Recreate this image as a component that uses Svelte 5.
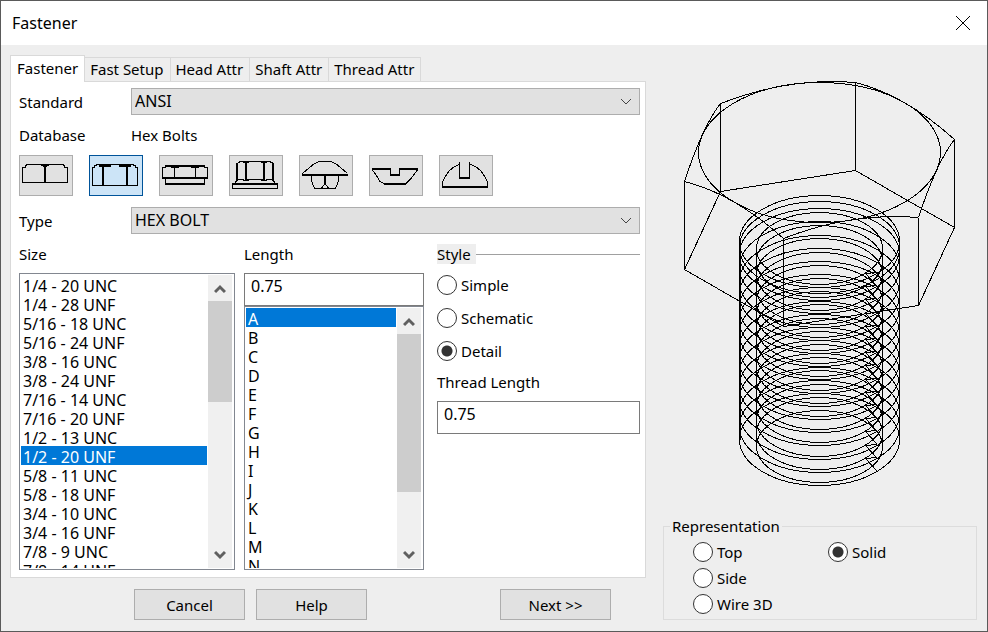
<script>
  // Fastener dialog: database pickers on the left, wireframe preview on the right.

  const tabs = ['Fastener', 'Fast Setup', 'Head Attr', 'Shaft Attr', 'Thread Attr'];

  const sizes = [
    '1/4 - 20 UNC', '1/4 - 28 UNF', '5/16 - 18 UNC', '5/16 - 24 UNF',
    '3/8 - 16 UNC', '3/8 - 24 UNF', '7/16 - 14 UNC', '7/16 - 20 UNF',
    '1/2 - 13 UNC', '1/2 - 20 UNF', '5/8 - 11 UNC', '5/8 - 18 UNF',
    '3/4 - 10 UNC', '3/4 - 16 UNF', '7/8 - 9 UNC', '7/8 - 14 UNF'
  ];
  const lengths = 'ABCDEFGHIJKLMN'.split('');

  // thin strokes are 1px, thick ones 2px
  const heads = [
    {
      name: 'Square Bolts',
      thin: 'M3.5 27.5V12.5H6.5V10.5H7.5V9.5H44.5V10.5H45.5V12.5H48.5V27.5ZM22 10.5H30M24 11.5H28',
      thick: 'M26 11V27'
    },
    {
      name: 'Hex Bolts',
      thin: 'M3.5 30.5V12.5H5.5V10.5H7.5V9.5H44.5V10.5H46.5V12.5H48.5V30.5Z',
      thick: 'M14 11V30M38 11V30M10 11H22M30 11H42'
    },
    {
      name: 'Hex Nuts',
      thin: 'M3.5 22V12.5H6.5V10.5H45.5V12.5H48.5V22M15.5 12V22M36.5 12V22M12 12.5H20M32 12.5H40M6.5 23V29M45.5 23V29',
      thick: 'M7 11H46M3 23H49M6 29H46'
    },
    {
      name: 'Flange Bolts',
      thin: 'M8.5 7.5H10.5V6.5H41.5V7.5H43.5M3.5 29V33.5H48.5V29M9 24.5H15M18 24.5H34M37 24.5H44M14 7.5H20M14 25.5H20M32 7.5H38M32 25.5H38M6.5 28V26.5H8M45.5 28V26.5H44',
      thick: 'M8 8V26M17 7V26M35 7V26M44 8V26M3 29H49'
    },
    {
      name: 'Round Head Bolts',
      thin: 'M3.5 19V18.5L10.5 12.5L15.5 8.5L20.5 6.5H31.5L36.5 8.5L41.5 12.5L48.5 18.5M12.5 21V26L15.5 33.5H36.5L39.5 26V21M26 29L22.5 33M26 29L29.5 33',
      thick: 'M3 20H49M26 21V30'
    },
    {
      name: 'Flat Head Screws',
      thin: 'M3.5 15L7.5 20.5L10.5 26L15.5 29M36.5 29L41.5 24L48.5 15M21.5 14V20M30.5 14V20',
      thick: 'M3 14H22M30 14H49M21 20H31M15 29H37'
    },
    {
      name: 'Slotted Screws',
      thin: 'M3.5 31V27.5L5.5 22.5L10.5 15.5L15.5 11.5L20.5 9.5V8M48.5 31V27.5L46.5 22.5L41.5 15.5L36.5 11.5L31.5 9.5M20.5 7V23M30.5 7V23',
      thick: 'M3 32H49M20 23H31'
    }
  ];

  const styles = ['Simple', 'Schematic', 'Detail'];
  const views = ['Top', 'Side', 'Wire 3D', 'Solid'];

  let standard = $state('ANSI');
  let head = $state('Hex Bolts');
  let type = $state('HEX BOLT');
  let size = $state('1/2 - 20 UNF');
  let lengthRow = $state('A');
  let length = $state('0.75');
  let style = $state('Detail');
  let threadLength = $state('0.75');
  let view = $state('Solid');
  let tab = $state('Fastener');

  // Preview geometry, origin at the centre of the head's top circle.
  const headDepth = 88;
  const hex = [
    [-99.5, -48.5], [35.5, -69.5], [134.5, -12.5],
    [98.5, 65.5], [-36.5, 86.5], [-135.5, 29.5]
  ];
  const edges = hex.map((a, i) => [a, hex[(i + 1) % 6]]);

  const chamfer = edges
    .map(([a, b]) => `M${a}Q${(a[0] + b[0]) / 2} ${(a[1] + b[1]) / 2 - 16} ${b}`)
    .join('');
  const underside = edges
    .map(([a, b]) => `M${a}v${headDepth}L${b[0]} ${b[1] + headDepth}`)
    .join('');

  const pitch = 13.2;
  const turns = Array.from({ length: 16 }, (_, i) => Math.round(i * pitch));
  const profile = turns
    .slice(0, 15)
    .map((y) => `M57.5 ${y + 120.5}l-12 1l12 13`)
    .join('');
</script>

{#snippet scrollbar(thumb, name)}
  <div class="scrollbar">
    <button type="button" class="arrow" aria-label="Scroll {name} up">
      <svg width="12" height="12" viewBox="0 0 12 12"><path d="M1 10l5-5 5 5" /></svg>
    </button>
    <div class="track"><div class="thumb" style:height="{thumb}%"></div></div>
    <button type="button" class="arrow" aria-label="Scroll {name} down">
      <svg width="12" height="12" viewBox="0 0 12 12"><path d="M1 3l5 5 5-5" /></svg>
    </button>
  </div>
{/snippet}

{#snippet chevron()}
  <svg class="chevron" width="12" height="8" viewBox="0 0 12 8"><path d="M1 1l5 5 5-5" /></svg>
{/snippet}

<div class="window">
  <header class="titlebar">
    <h1>Fastener</h1>
    <button type="button" class="close" aria-label="Close">
      <svg width="16" height="16" viewBox="0 0 16 16"><path d="M1 1l14 14M15 1L1 15" /></svg>
    </button>
  </header>

  <main>
    <div class="left">
      <div class="tabs" role="tablist">
        {#each tabs as t}
          <button type="button" role="tab" class="tab" class:active={tab === t} aria-selected={tab === t} onclick={() => (tab = t)}>{t}</button>
        {/each}
      </div>

      <section class="panel">
        <div class="row">
          <label for="standard">Standard</label>
          <div class="combo">
            <select id="standard" bind:value={standard}>
              <option>ANSI</option>
            </select>
            {@render chevron()}
          </div>
        </div>

        <div class="row database">
          <span>Database</span>
          <span>{head}</span>
        </div>

        <div class="heads">
          {#each heads as h}
            <button type="button" class="head" class:active={head === h.name} aria-label={h.name} onclick={() => (head = h.name)}>
              <svg width="52" height="39" viewBox="1 1 52 39">
                <path d={h.thin} />
                <path d={h.thick} stroke-width="2" />
              </svg>
            </button>
          {/each}
        </div>

        <div class="row">
          <label for="type">Type</label>
          <div class="combo">
            <select id="type" bind:value={type}>
              <option>HEX BOLT</option>
            </select>
            {@render chevron()}
          </div>
        </div>

        <div class="columns">
          <div class="column">
            <label for="size">Size</label>
            <div class="list">
              <select id="size" size="15" bind:value={size}>
                {#each sizes as s}<option>{s}</option>{/each}
              </select>
              {@render scrollbar(42, 'sizes')}
            </div>
          </div>

          <div class="column">
            <label for="length">Length</label>
            <input id="length" type="text" bind:value={length} />
            <div class="list">
              <select size="13" aria-label="Length code" bind:value={lengthRow}>
                {#each lengths as l}<option>{l}</option>{/each}
              </select>
              {@render scrollbar(76, 'lengths')}
            </div>
          </div>

          <div class="column options">
            <fieldset class="style">
              <legend>Style</legend>
              {#each styles as s}
                <label class="radio"><input type="radio" name="style" value={s} bind:group={style} />{s}</label>
              {/each}
            </fieldset>
            <label class="thread" for="thread">Thread Length</label>
            <input id="thread" type="text" bind:value={threadLength} />
          </div>
        </div>
      </section>

      <footer>
        <button type="button" class="push">Cancel</button>
        <button type="button" class="push">Help</button>
        <button type="button" class="push next">Next &gt;&gt;</button>
      </footer>
    </div>

    <div class="right">
      <svg class="preview" viewBox="-157 -97 314 460" role="img" aria-label="Bolt preview">
        <ellipse cx="-0.5" cy="0.5" rx="121" ry="70" />
        <path d={chamfer} />
        <path d={underside} />
        <ellipse cx="-0.5" cy="95.5" rx="80" ry="46" />
        {#each turns as y}
          <ellipse cx="-0.5" cy={y + 89.5} rx="80" ry="46" />
          <ellipse cx="-0.5" cy={y + 96.5} rx="63" ry="36" />
        {/each}
        <path d="M-80.5 90V288M-79.5 90V288M79.5 90V288M-63.5 96V294M62.5 96V294" />
        <path d={profile} />
      </svg>

      <fieldset class="views">
        <legend>Representation</legend>
        {#each views as v}
          <label class="radio"><input type="radio" name="view" value={v} bind:group={view} />{v}</label>
        {/each}
      </fieldset>
    </div>
  </main>
</div>

<style>
  :global(body) { margin: 0; }

  .window {
    box-sizing: border-box;
    min-height: 100vh;
    display: flex;
    flex-direction: column;
    border: 1px solid #5a5a5a;
    background: #eee;
    color: #000;
    font: 15px/20px "Noto Sans", "Open Sans", sans-serif;
  }
  button, input, select { font: inherit; color: inherit; border-radius: 0; }
  select, input[type='text'] { font-size: 16px; }
  svg { display: block; fill: none; stroke: #000; }

  .titlebar {
    display: flex;
    align-items: center;
    justify-content: space-between;
    height: 44px;
    padding: 0 16px 0 11px;
    background: #fff;
  }
  h1 { margin: 0; font-size: 16px; font-weight: 400; }
  .close { padding: 0; border: 0; background: none; }

  main {
    flex: 1;
    display: grid;
    grid-template-columns: minmax(0, 636fr) minmax(0, 314fr);
    column-gap: 17px;
    padding: 10px 10px 11px 9px;
  }
  .left, .right { display: flex; flex-direction: column; }

  .tabs { display: flex; align-items: flex-end; height: 26px; }
  .tab {
    height: 24px;
    padding: 0 6px 2px 5px;
    border: 1px solid #d9d9d9;
    border-left: 0;
    border-bottom: 0;
    background: #eee;
    white-space: nowrap;
  }
  .tab.active {
    z-index: 1;
    height: 27px;
    margin-bottom: -1px;
    padding: 0 6px 3px;
    border-left: 1px solid #d9d9d9;
    background: #fff;
  }

  .panel {
    flex: 1;
    display: flex;
    flex-direction: column;
    padding: 6px 5px 7px 8px;
    border: 1px solid #d9d9d9;
    background: #fff;
  }
  .row { display: grid; grid-template-columns: 112px 1fr; align-items: center; }
  .database { margin: 10px 0; }

  .combo { position: relative; }
  .combo select {
    display: block;
    width: 100%;
    height: 27px;
    padding: 0 24px 2px 3px;
    appearance: none;
    border: 1px solid #adadad;
    background: #e1e1e1;
  }
  .chevron {
    position: absolute;
    right: 8px;
    top: 10px;
    stroke: #444;
    pointer-events: none;
  }

  .heads { display: flex; gap: 16px; margin-bottom: 11px; }
  .head {
    width: 54px;
    height: 41px;
    padding: 0;
    border: 1px solid #adadad;
    background: #e1e1e1;
  }
  .head.active { border-color: #00549a; background: #cce4f7; }
  .head svg, .preview { shape-rendering: crispEdges; }

  .columns {
    flex: 1;
    display: grid;
    grid-template-columns: minmax(0, 216fr) minmax(0, 180fr) minmax(0, 207fr);
    column-gap: 9px;
    margin-top: 10px;
  }
  .column { display: flex; flex-direction: column; }
  .column > label { margin-bottom: 9px; }
  .options { padding-left: 4px; }

  .list {
    flex: 1 1 0;
    min-height: 200px;
    display: flex;
    padding: 1px;
    border: 1px solid #828790;
    background: #fff;
  }
  .list select {
    flex: 1;
    min-width: 0;
    height: 100%;
    padding: 0;
    border: 0;
    outline: 0;
    background: #fff;
    overflow: hidden;
    scrollbar-width: none;
  }
  .list option {
    box-sizing: border-box;
    height: 19px;
    min-height: 19px;
    padding: 0 2px;
    line-height: 18px;
  }
  .list option:checked {
    background: linear-gradient(#0078d7, #0078d7);
    -webkit-text-fill-color: #fff;
  }

  .scrollbar {
    width: 24px;
    display: flex;
    flex-direction: column;
    margin: 0 1px;
    background: #f0f0f0;
  }
  .arrow {
    display: grid;
    place-items: center;
    height: 26px;
    padding: 0;
    border: 0;
    background: none;
  }
  .arrow svg { stroke: #606060; stroke-width: 3; }
  .track { flex: 1; }
  .thumb { background: #cdcdcd; }

  input[type='text'] {
    box-sizing: border-box;
    width: 100%;
    height: 33px;
    padding: 0 6px 8px;
    border: 1px solid #7a7a7a;
    background: #fff;
  }

  fieldset { min-width: 0; margin: 0; padding: 0; border: 0; }
  .style {
    display: flex;
    flex-direction: column;
    gap: 13px;
    padding-top: 11px;
    border-top: 1px solid #a0a0a0;
  }
  .style legend { padding: 0 5px 0 0; background: #eee; }
  .column > .thread { margin: 11px 0 9px; }

  .radio { display: flex; align-items: center; gap: 4px; }
  .radio input {
    width: 20px;
    height: 20px;
    margin: 0;
    appearance: none;
    border: 1px solid #333;
    border-radius: 50%;
    background: #fff;
  }
  .radio input:checked { background: radial-gradient(circle, #333 5px, #fff 6px); }

  footer { display: flex; gap: 11px; margin-top: 11px; padding: 0 35px 0 124px; }
  .push {
    width: 111px;
    height: 31px;
    padding: 0;
    border: 1px solid #adadad;
    background: #e1e1e1;
  }
  .next { margin-left: auto; }

  .right { justify-content: space-between; }
  .preview { width: 100%; }
  .views {
    display: grid;
    grid-template: repeat(3, 20px) / 135px 1fr;
    grid-auto-flow: column;
    row-gap: 6px;
    padding: 6px 29px 5px;
    border: 1px solid #dcdcdc;
  }
  .views legend { margin-left: -23px; padding: 0 2px; }
</style>
